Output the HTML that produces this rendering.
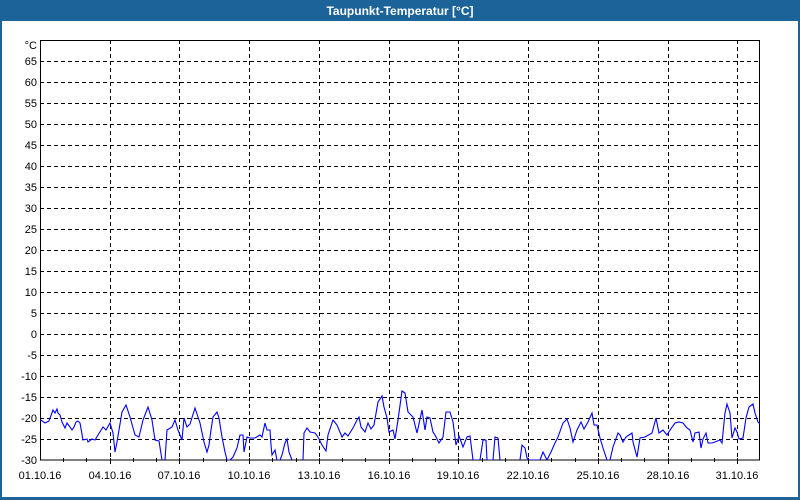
<!DOCTYPE html>
<html><head><style>
html,body{margin:0;padding:0;width:800px;height:500px;overflow:hidden;background:#fff}
svg text{font-family:"Liberation Sans","DejaVu Sans",sans-serif;font-size:11px;fill:#000}
</style></head><body>
<svg width="800" height="500" xmlns="http://www.w3.org/2000/svg">
<rect x="0" y="0" width="800" height="500" fill="#1c6399"/>
<rect x="2" y="21" width="796" height="476" fill="#fff"/>
<text x="400" y="15" text-anchor="middle" style="fill:#fff;font-weight:bold;font-size:12px">Taupunkt-Temperatur [°C]</text>
<defs><clipPath id="c"><rect x="40" y="40" width="720" height="420"/></clipPath></defs>
<g stroke="#000" stroke-width="1" stroke-dasharray="4,3" fill="none">
<path d="M40 61.5H760M40 82.5H760M40 103.5H760M40 124.5H760M40 145.5H760M40 166.5H760M40 187.5H760M40 208.5H760M40 229.5H760M40 250.5H760M40 271.5H760M40 292.5H760M40 313.5H760M40 334.5H760M40 355.5H760M40 376.5H760M40 397.5H760M40 418.5H760M40 439.5H760"/>
<path d="M110.5 40V460M179.5 40V460M249.5 40V460M319.5 40V460M389.5 40V460M458.5 40V460M528.5 40V460M598.5 40V460M668.5 40V460M737.5 40V460"/>
</g>
<rect x="40.5" y="40.5" width="719" height="419.5" fill="none" stroke="#000"/>
<g stroke="#000"><path d="M63.5 458V462M86.5 458V462M133.5 458V462M156.5 458V462M203.5 458V462M226.5 458V462M272.5 458V462M296.5 458V462M342.5 458V462M365.5 458V462M412.5 458V462M435.5 458V462M482.5 458V462M505.5 458V462M551.5 458V462M575.5 458V462M621.5 458V462M644.5 458V462M691.5 458V462M714.5 458V462M110.5 458V464M179.5 458V464M249.5 458V464M319.5 458V464M389.5 458V464M458.5 458V464M528.5 458V464M598.5 458V464M668.5 458V464M737.5 458V464"/></g>
<g text-anchor="end">
<text x="37" y="49">°C</text>
<text x="37" y="65">65</text><text x="37" y="86">60</text><text x="37" y="107">55</text><text x="37" y="128">50</text><text x="37" y="149">45</text><text x="37" y="170">40</text><text x="37" y="191">35</text><text x="37" y="212">30</text><text x="37" y="233">25</text><text x="37" y="254">20</text><text x="37" y="275">15</text><text x="37" y="296">10</text><text x="37" y="317">5</text><text x="37" y="338">0</text><text x="37" y="359">-5</text><text x="37" y="380">-10</text><text x="37" y="401">-15</text><text x="37" y="422">-20</text><text x="37" y="443">-25</text><text x="37" y="464">-30</text>
</g>
<g text-anchor="middle">
<text x="40" y="479">01.10.16</text><text x="110" y="479">04.10.16</text><text x="179" y="479">07.10.16</text><text x="249" y="479">10.10.16</text><text x="319" y="479">13.10.16</text><text x="389" y="479">16.10.16</text><text x="458" y="479">19.10.16</text><text x="528" y="479">22.10.16</text><text x="598" y="479">25.10.16</text><text x="668" y="479">28.10.16</text><text x="737" y="479">31.10.16</text>
</g>
<polyline clip-path="url(#c)" fill="none" stroke="#0000ff" stroke-width="1.1" points="40.7,420 45,423 49,421 53,410 55,413 57,409 58,413 60,415 62,422 65,428 67,423 70,427 72,430 74,427 76,422 78,421 80,423 83,440 87,439 88,442 92,439 95,440 98,435 103,427 106,430 110,423 113,433 115,452 117,442 122,412 126,405 130,417 135,435 139,437 143,420 148,407 152,420 155,440 159,441 162,460 163,470 165,460 167,430 172,427 175,420 178,430 182,440 184,418 187,427 190,424 195,408 200,423 204,442 207,452 209,445 211,430 213,417 217,412 219,418 222,437 225,452 227,460 230,460 233,457 237,448 240,435 243,435 244,452 247,437 250,438 255,438 260,435 262,437 265,423 267,430 270,430 271,445 272,455 275,450 277,460 280,460 282,455 285,443 287,439 289,452 292,460 297,470 303,460 304,433 307,428 310,432 315,433 318,437 322,445 326,451 328,435 333,420 337,425 342,437 345,433 348,436 353,428 357,420 359,417 361,427 365,432 368,423 371,429 374,425 378,402 382,396 384,407 387,418 389,432 393,430 395,439 398,420 402,391 405,393 408,412 413,417 417,433 422,410 425,430 427,417 430,418 433,432 435,435 439,443 443,437 446,412 450,412 453,422 456,445 459,436 463,447 467,437 470,436 473,460 477,460 480,460 483,440 486,440 487,460 493,460 495,437 498,438 500,460 510,470 520,460 522,445 525,448 527,458 529,460 540,460 543,452 547,460 551,452 555,443 558,437 563,423 567,419 570,428 573,442 577,430 581,422 584,429 588,422 592,413 594,425 597,425 600,438 603,448 607,460 610,460 613,447 618,433 620,435 623,442 626,437 632,433 633,442 637,457 640,438 645,437 652,433 656,418 659,433 663,430 667,435 670,430 675,423 679,422 683,423 687,428 690,430 693,442 695,433 699,432 701,448 703,439 706,433 708,443 712,443 715,442 720,440 722,443 725,413 727,404 730,413 732,438 735,428 737,432 739,439 743,438 746,418 749,407 753,404 755,413 758,422 760,424"/>
</svg>
</body></html>
